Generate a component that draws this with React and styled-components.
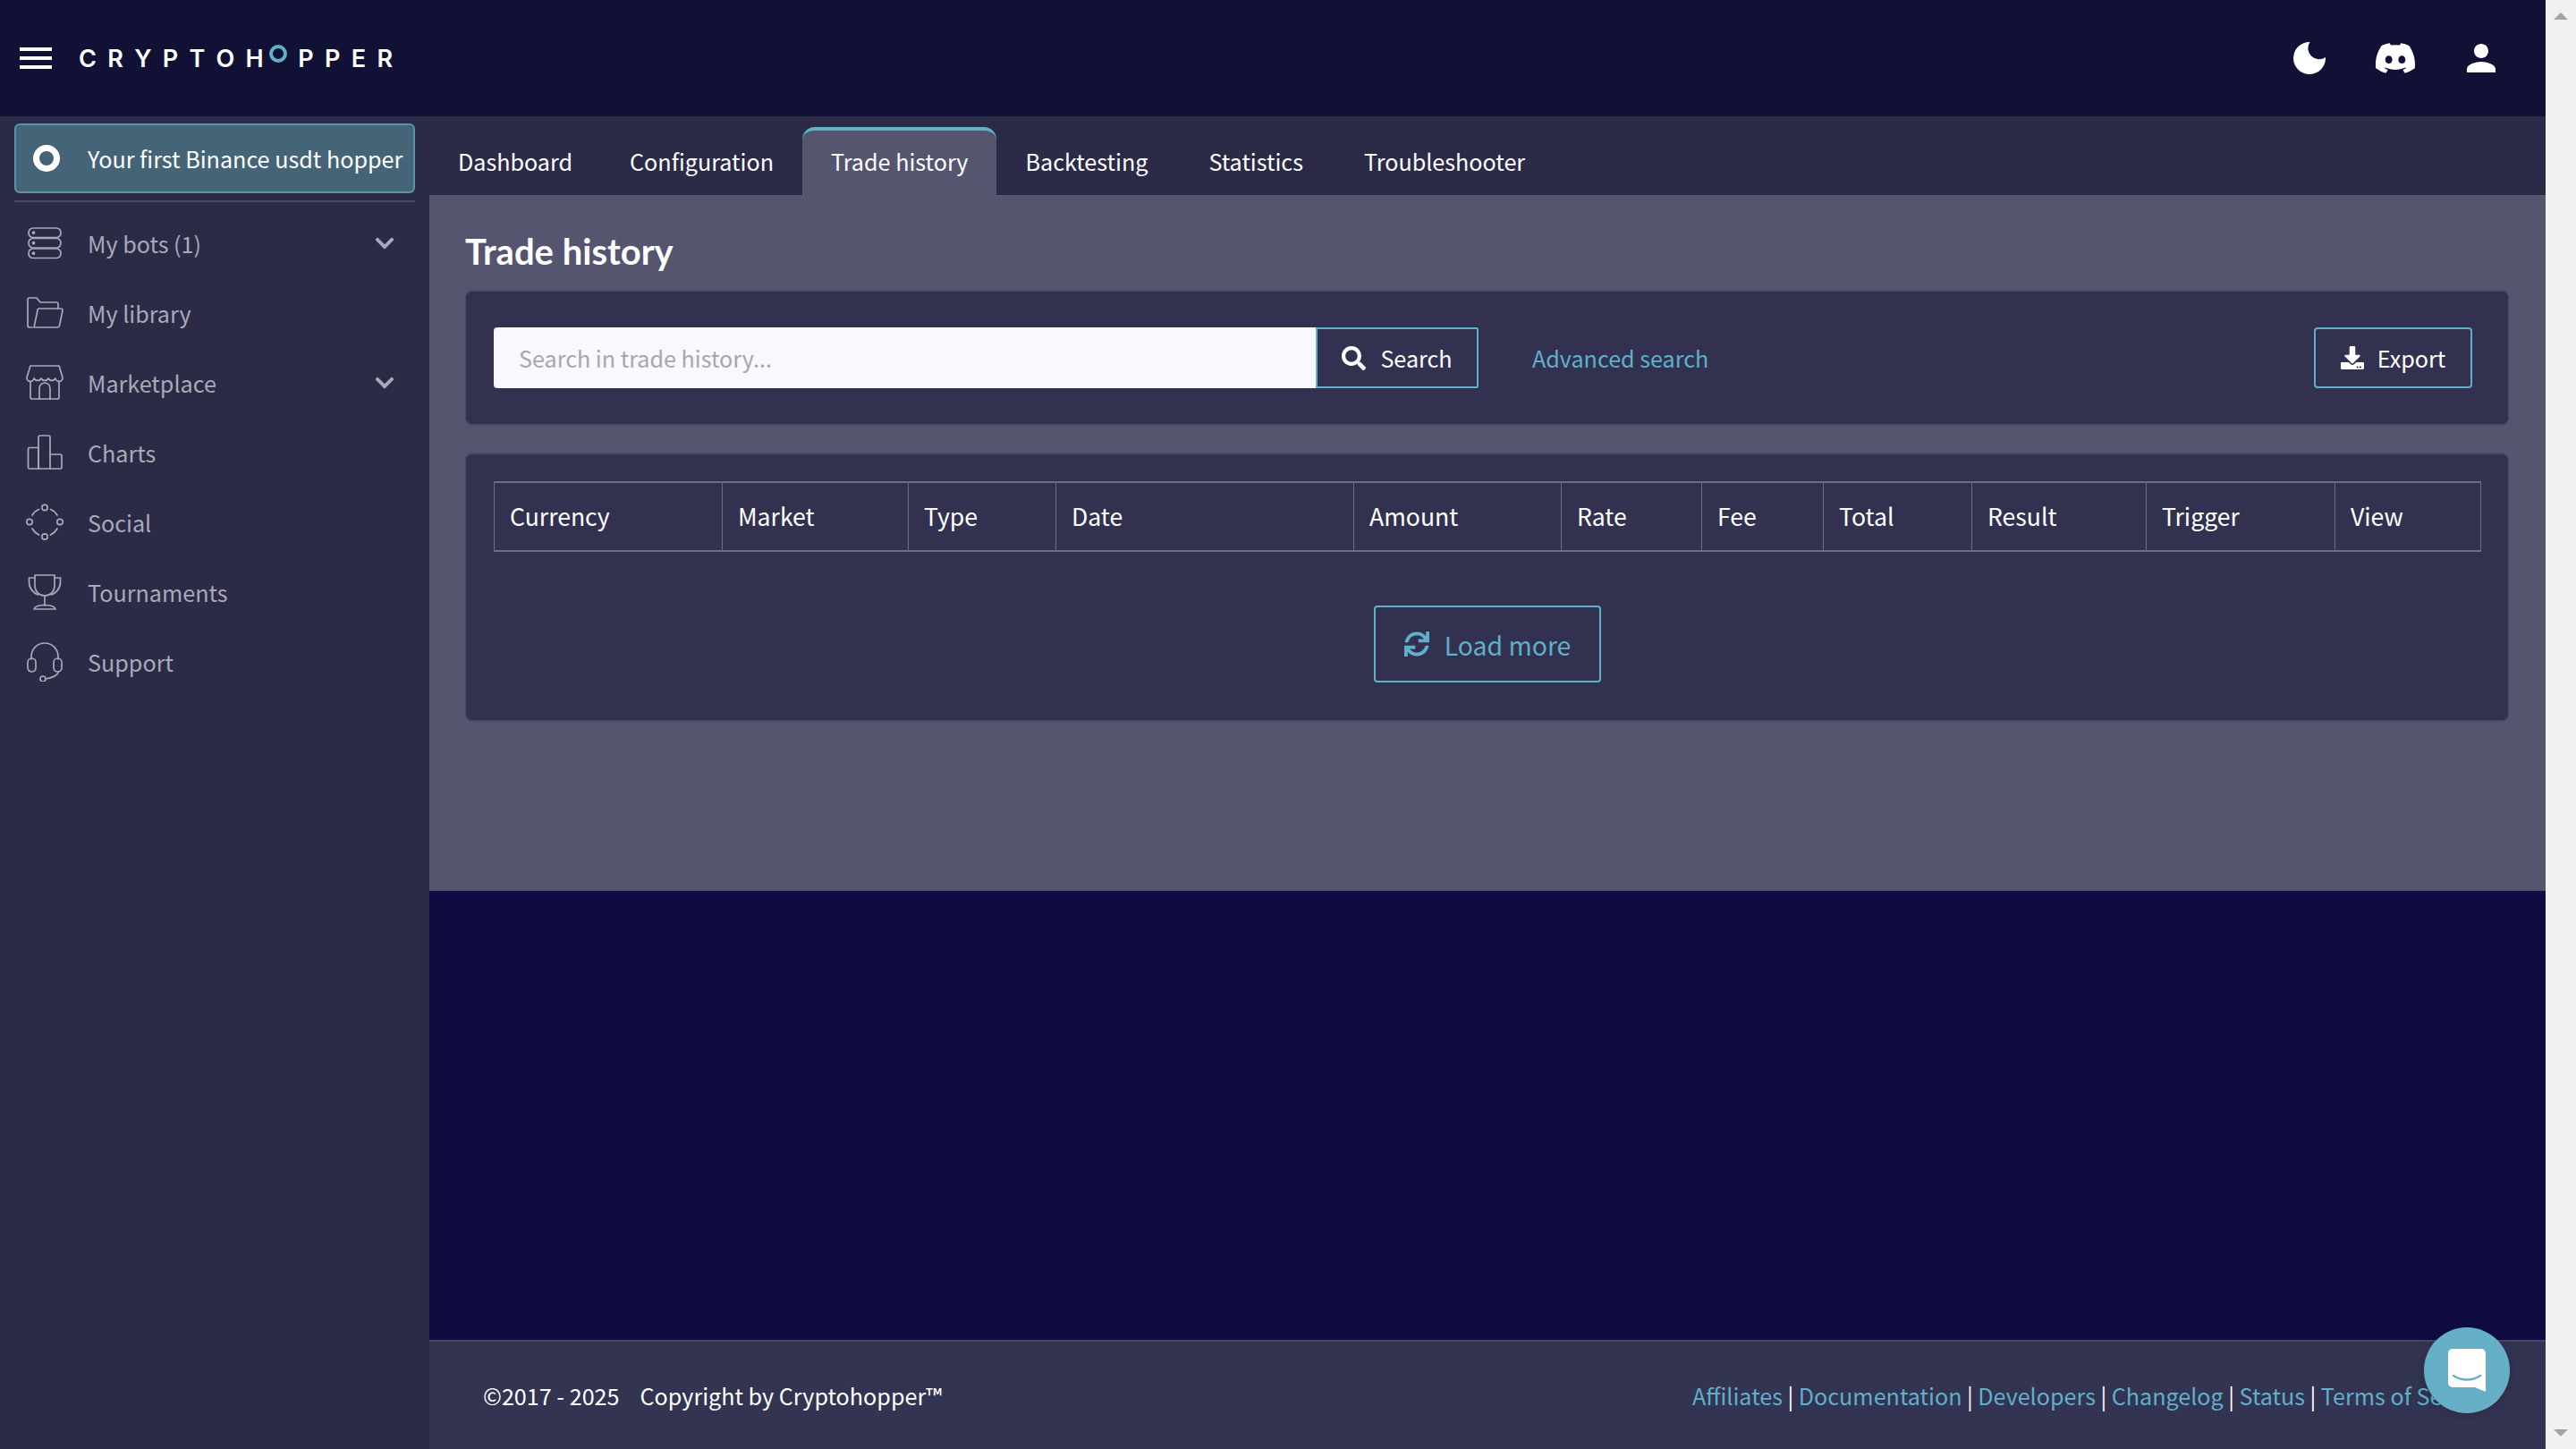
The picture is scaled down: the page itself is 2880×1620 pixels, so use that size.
import React from "react";
import styled, { createGlobalStyle } from "styled-components";
import { FaDiscord, FaSearch, FaDownload, FaSync, FaChevronDown } from "react-icons/fa";

const GlobalStyle = createGlobalStyle`
  html, body {
    margin: 0;
    padding: 0;
    overflow: hidden;
  }
  * {
    box-sizing: border-box;
  }
  body {
    font-family: "Noto Sans CJK SC", "Noto Sans", sans-serif;
    background: #0f0c42;
    color: #fff;
  }
`;

const Page = styled.div`
  position: relative;
  display: grid;
  grid-template-columns: 1fr 34px;
  width: 2880px;
  height: 1620px;
  overflow: hidden;
`;

const Shell = styled.div`
  display: grid;
  grid-template-rows: 130px 1fr;
  min-width: 0;
`;

const Scrollbar = styled.div`
  display: flex;
  flex-direction: column;
  justify-content: space-between;
  align-items: center;
  padding: 14px 0;
  background: #f1f1f1;
`;

const Arrow = styled.span`
  width: 0;
  height: 0;
  border-left: 8px solid transparent;
  border-right: 8px solid transparent;
  ${(p) => (p.$down ? "border-top: 8px solid #a3a3a3;" : "border-bottom: 8px solid #a3a3a3;")}
`;

const Header = styled.header`
  display: flex;
  align-items: center;
  justify-content: space-between;
  padding: 0 56px 0 22px;
  background: #111136;
`;

const Brand = styled.div`
  display: flex;
  align-items: center;
  gap: 30px;
`;

const Burger = styled.div`
  display: flex;
  flex-direction: column;
  gap: 5.5px;
  width: 36px;

  span {
    height: 4.5px;
    background: #fff;
  }
`;

const Logo = styled.div`
  display: flex;
  align-items: center;
  gap: 12.3px;
  margin-top: 1px;
  font-family: Inter, sans-serif;
  font-size: 27px;
  font-weight: 600;
  line-height: 30px;
  color: #fff;
`;

const LogoRing = styled.i`
  width: 20px;
  height: 20px;
  margin: -12px 0 0 -6px;
  border: 4px solid #5fb0c8;
  border-radius: 50%;
`;

const HeaderIcons = styled.div`
  display: flex;
  align-items: center;
  gap: 54px;
  color: #fff;
  font-size: 36px;

  svg {
    display: block;
    fill: currentColor;
  }
`;

const DiscordIcon = styled(FaDiscord)`
  margin-right: 2px;
`;

const Body = styled.div`
  display: grid;
  grid-template-columns: 480px 1fr;
  min-height: 0;
`;

const Sidebar = styled.aside`
  padding: 8px 16px 0;
  background: #2c2b47;
`;

const ActiveBot = styled.div`
  display: flex;
  align-items: center;
  gap: 31px;
  height: 78px;
  padding: 0 0 0 19px;
  background: #466478;
  border: 2px solid #5a94aa;
  border-radius: 6px;
  font-size: 25.15px;
  color: #fff;
  white-space: nowrap;
`;

const BotDot = styled.i`
  flex: none;
  width: 30px;
  height: 30px;
  border: 7px solid #fff;
  border-radius: 50%;
`;

const Divider = styled.div`
  height: 2px;
  margin: 8px 0 7px;
  background: #4a4862;
`;

const Menu = styled.nav`
  display: flex;
  flex-direction: column;
`;

const MenuItem = styled.div`
  display: flex;
  align-items: center;
  height: 78px;
  padding: 0 22px 0 12px;
  color: #a9a9b8;
  font-size: 25.15px;

  svg.menu-icon {
    width: 44px;
    height: 44px;
    margin-right: 26px;
    fill: none;
    stroke: #a9a9b8;
    stroke-width: 1.7;
    stroke-linecap: round;
    stroke-linejoin: round;
  }
`;

const MenuLabel = styled.span`
  flex: 1;
`;

const Main = styled.main`
  display: flex;
  flex-direction: column;
  min-width: 0;
`;

const Tabs = styled.div`
  display: flex;
  align-items: flex-end;
  height: 88px;
  background: #2c2b47;
`;

const Tab = styled.div`
  display: flex;
  align-items: center;
  height: 76px;
  padding: 0 32px 4px;
  margin-left: ${(p) => p.$gap || 0}px;
  border-top: 4px solid ${(p) => (p.$active ? "#5fb0c8" : "transparent")};
  border-radius: 14px 14px 0 0;
  background: ${(p) => (p.$active ? "#55556f" : "transparent")};
  font-size: 25.15px;
  color: #fff;
  white-space: nowrap;
`;

const Panel = styled.section`
  display: flex;
  flex-direction: column;
  height: 778px;
  padding: 38px 41px 0 40px;
  background: #55556f;
`;

const Title = styled.h1`
  margin: 0 0 18px;
  font-family: Lato, sans-serif;
  font-size: 40px;
  line-height: 50px;
  font-weight: 700;
  color: #fff;
`;

const Card = styled.div`
  background: #323250;
  border: 1px solid #4a4a66;
  border-top-width: 2px;
  border-bottom-width: 2px;
  border-radius: 8px;
`;

const SearchCard = styled(Card)`
  display: flex;
  align-items: center;
  height: 152px;
  padding: 0 40px 0 31px;
  margin-bottom: 30px;
`;

const SearchInput = styled.input`
  width: 919px;
  height: 68px;
  padding: 0 28px;
  background: #f8f8fe;
  border: 0;
  border-radius: 4px 0 0 4px;
  font: 25.15px "Noto Sans CJK SC", sans-serif;
  outline: none;

  &::placeholder {
    color: #a7a7ad;
    opacity: 1;
  }
`;

const OutlineButton = styled.button`
  display: inline-flex;
  align-items: center;
  justify-content: center;
  gap: ${(p) => p.$gap || 15}px;
  width: ${(p) => p.$w}px;
  height: ${(p) => p.$h || 68}px;
  padding: 0;
  background: transparent;
  border: 2px solid #5fb0c8;
  border-radius: ${(p) => (p.$square ? "0 2px 2px 0" : "4px")};
  color: ${(p) => (p.$accent ? "#5fb0c8" : "#fff")};
  font: ${(p) => p.$size || 25.15}px "Noto Sans CJK SC", sans-serif;
`;

const AdvancedLink = styled.a`
  margin-left: 60px;
  margin-right: auto;
  color: #5fb0c8;
  font-size: 25.15px;
`;

const TableCard = styled(Card)`
  height: 301px;
  padding: 30px 30px 0 31px;
`;

const Table = styled.table`
  width: 2221px;
  height: 79px;
  border-collapse: collapse;
  table-layout: fixed;
`;

const Th = styled.th`
  width: ${(p) => p.$w}px;
  padding: 0 0 2px 17px;
  border: 1px solid #6b6b82;
  border-top-width: 2px;
  border-bottom-width: 2px;
  font-size: 26.6px;
  font-weight: 400;
  text-align: left;
`;

const LoadRow = styled.div`
  display: flex;
  justify-content: center;
  margin-top: 60px;
`;

const Filler = styled.div`
  flex: 1;
  background: #0f0c42;
`;

const Footer = styled.footer`
  display: flex;
  align-items: center;
  justify-content: space-between;
  height: 122px;
  padding: 0 0 0 60px;
  background: #333352;
  border-top: 2px solid #46466a;
  font-size: 25.15px;
  white-space: nowrap;
`;

const Copy = styled.div`
  display: flex;
  gap: 23px;
`;

const FooterLinks = styled.div`
  display: flex;
  gap: 5.5px;
  padding-right: 59px;

  a {
    color: #5fb0c8;
  }
`;

const ChatBubble = styled.div`
  position: absolute;
  right: 74px;
  bottom: 40px;
  display: flex;
  align-items: center;
  justify-content: center;
  width: 96px;
  height: 96px;
  border-radius: 50%;
  background: #65b0c6;
  box-shadow: 0 2px 16px rgba(0, 0, 0, 0.12);
`;

const ICONS = {
  bots: (
    <>
      <rect x="4" y="5" width="36" height="10.5" rx="5" />
      <rect x="4" y="16.5" width="36" height="10.5" rx="5" />
      <rect x="4" y="28" width="36" height="10.5" rx="5" />
      <circle cx="9.5" cy="10.2" r="1" />
      <circle cx="9.5" cy="21.7" r="1" />
      <circle cx="9.5" cy="33.2" r="1" />
    </>
  ),
  library: (
    <>
      <path d="M8 38H5a2 2 0 0 1-2-2V7a2 2 0 0 1 2-2h8l4 5h18a2 2 0 0 1 2 2v5" />
      <path d="M10 38l4-19a2 2 0 0 1 2-2h24a2 2 0 0 1 2 2l-3.5 17a2.5 2.5 0 0 1-2.5 2z" />
    </>
  ),
  market: (
    <>
      <path d="M6 3h32l4 13a4 4 0 0 1-8 1 4.5 4.5 0 0 1-8 0 4.500 4.500 0 0 1-8 0 4.500 4.500 0 0 1-8 0 4 4 0 0 1-8-1z" />
      <path d="M6 20v18a2 2 0 0 0 2 2h28a2 2 0 0 0 2-2V20" />
      <path d="M16 40V28a6 6 0 0 1 12 0v12" />
    </>
  ),
  charts: (
    <>
      <path d="M5 40a1.500 1.500 0 0 1-1.500-1.500V18A1.500 1.500 0 0 1 5 16.500h10V40z" />
      <path d="M15 40V5a2 2 0 0 1 2-2h9a2 2 0 0 1 2 2v35z" />
      <path d="M28 24h11a2 2 0 0 1 2 2v12.500a1.500 1.500 0 0 1-1.500 1.500H28" />
    </>
  ),
  social: (
    <>
      <circle cx="22" cy="5.500" r="3.200" />
      <circle cx="22" cy="38" r="3.200" />
      <circle cx="5" cy="21.500" r="3.200" />
      <circle cx="39" cy="21.500" r="3.200" />
      <path d="M15.500 7.500Q10.500 9.500 8 14M28.500 7.500Q33.500 9.500 36 14M8 29Q10.500 33.500 15.500 36M36 29Q33.500 33.500 28.500 36" />
    </>
  ),
  trophy: (
    <>
      <path d="M11 3h22v12a11 11 0 0 1-22 0z" />
      <path d="M11 6H4.500v5c0 7 5 12 10 14" />
      <path d="M33 6h6.500v5c0 7-5 12-10 14" />
      <path d="M22 26v11" />
      <path d="M10 41c1-3 6-4.500 12-4.500S33 38 34 41z" />
    </>
  ),
  support: (
    <>
      <path d="M7 19v-3a15 15 0 0 1 30 0v3" />
      <rect x="3" y="18" width="9" height="15" rx="4.500" />
      <rect x="32" y="18" width="9" height="15" rx="4.500" />
      <path d="M37 33c0 4-7 7-14 8" />
      <circle cx="20" cy="41" r="3" />
    </>
  ),
};

const MENU = [
  { icon: "bots", label: "My bots (1)", more: true },
  { icon: "library", label: "My library" },
  { icon: "market", label: "Marketplace", more: true },
  { icon: "charts", label: "Charts" },
  { icon: "social", label: "Social" },
  { icon: "trophy", label: "Tournaments" },
  { icon: "support", label: "Support" },
];

const TABS = [
  { label: "Dashboard" },
  { label: "Configuration" },
  { label: "Trade history", active: true },
  { label: "Backtesting" },
  { label: "Statistics", gap: 4 },
  { label: "Troubleshooter", gap: 4 },
];

const COLUMNS = [
  ["Currency", 255],
  ["Market", 208],
  ["Type", 165],
  ["Date", 333],
  ["Amount", 232],
  ["Rate", 157],
  ["Fee", 136],
  ["Total", 166],
  ["Result", 195],
  ["Trigger", 211],
  ["View", 163],
];

const LINKS = ["Affiliates", "Documentation", "Developers", "Changelog", "Status", "Terms of Service"];

export default function App() {
  return (
    <Page>
      <GlobalStyle />
      <Shell>
        <Header>
          <Brand>
            <Burger>
              <span />
              <span />
              <span />
            </Burger>
            <Logo>
              <span>C</span>
              <span>R</span>
              <span>Y</span>
              <span>P</span>
              <span>T</span>
              <span>O</span>
              <span>H</span>
              <LogoRing />
              <span>P</span>
              <span>P</span>
              <span>E</span>
              <span>R</span>
            </Logo>
          </Brand>
          <HeaderIcons>
            <svg width="36" height="36" viewBox="0 0 36 36">
              <path d="M18.5 0A18 18 0 1 0 36 17A12.400 12.400 0 0 1 18.500 0z" />
            </svg>
            <DiscordIcon size={48} />
            <svg width="32" height="32" viewBox="4 4 16 16">
              <path d="M12 12c2.210 0 4-1.790 4-4s-1.790-4-4-4-4 1.790-4 4 1.790 4 4 4zm0 2c-2.670 0-8 1.340-8 4v2h16v-2c0-2.660-5.330-4-8-4z" />
            </svg>
          </HeaderIcons>
        </Header>
        <Body>
          <Sidebar>
            <ActiveBot>
              <BotDot />
              Your first Binance usdt hopper
            </ActiveBot>
            <Divider />
            <Menu>
              {MENU.map((item) => (
                <MenuItem key={item.label}>
                  <svg className="menu-icon" viewBox="0 0 44 44">
                    {ICONS[item.icon]}
                  </svg>
                  <MenuLabel>{item.label}</MenuLabel>
                  {item.more && <FaChevronDown size={24} />}
                </MenuItem>
              ))}
            </Menu>
          </Sidebar>
          <Main>
            <Tabs>
              {TABS.map((tab) => (
                <Tab key={tab.label} $active={tab.active} $gap={tab.gap}>
                  {tab.label}
                </Tab>
              ))}
            </Tabs>
            <Panel>
              <Title>Trade history</Title>
              <SearchCard>
                <SearchInput placeholder="Search in trade history..." />
                <OutlineButton $w={182} $gap={16} $square>
                  <FaSearch size={27} />
                  Search
                </OutlineButton>
                <AdvancedLink>Advanced search</AdvancedLink>
                <OutlineButton $w={177}>
                  <FaDownload size={26} />
                  Export
                </OutlineButton>
              </SearchCard>
              <TableCard>
                <Table>
                  <thead>
                    <tr>
                      {COLUMNS.map(([name, w]) => (
                        <Th key={name} $w={w}>
                          {name}
                        </Th>
                      ))}
                    </tr>
                  </thead>
                </Table>
                <LoadRow>
                  <OutlineButton $w={254} $h={86} $size={28.4} $gap={17} $accent>
                    <FaSync size={28} />
                    Load more
                  </OutlineButton>
                </LoadRow>
              </TableCard>
            </Panel>
            <Filler />
            <Footer>
              <Copy>
                <span>©2017 - 2025</span>
                <span>Copyright by Cryptohopper™</span>
              </Copy>
              <FooterLinks>
                {LINKS.map((name, i) => (
                  <React.Fragment key={name}>
                    {i > 0 && <span>|</span>}
                    <a>{name}</a>
                  </React.Fragment>
                ))}
              </FooterLinks>
            </Footer>
          </Main>
        </Body>
      </Shell>
      <Scrollbar>
        <Arrow />
        <Arrow $down />
      </Scrollbar>
      <ChatBubble>
        <svg width="42" height="48" viewBox="0 0 42 48">
          <path d="M5 0h32a5 5 0 0 1 5 5v43l-12-5H5a5 5 0 0 1-5-5V5a5 5 0 0 1 5-5z" fill="#fff" />
          <path d="M6 30c9 6 21 6 30 0" fill="none" stroke="#65b0c6" strokeWidth="2.500" strokeLinecap="round" />
        </svg>
      </ChatBubble>
    </Page>
  );
}
